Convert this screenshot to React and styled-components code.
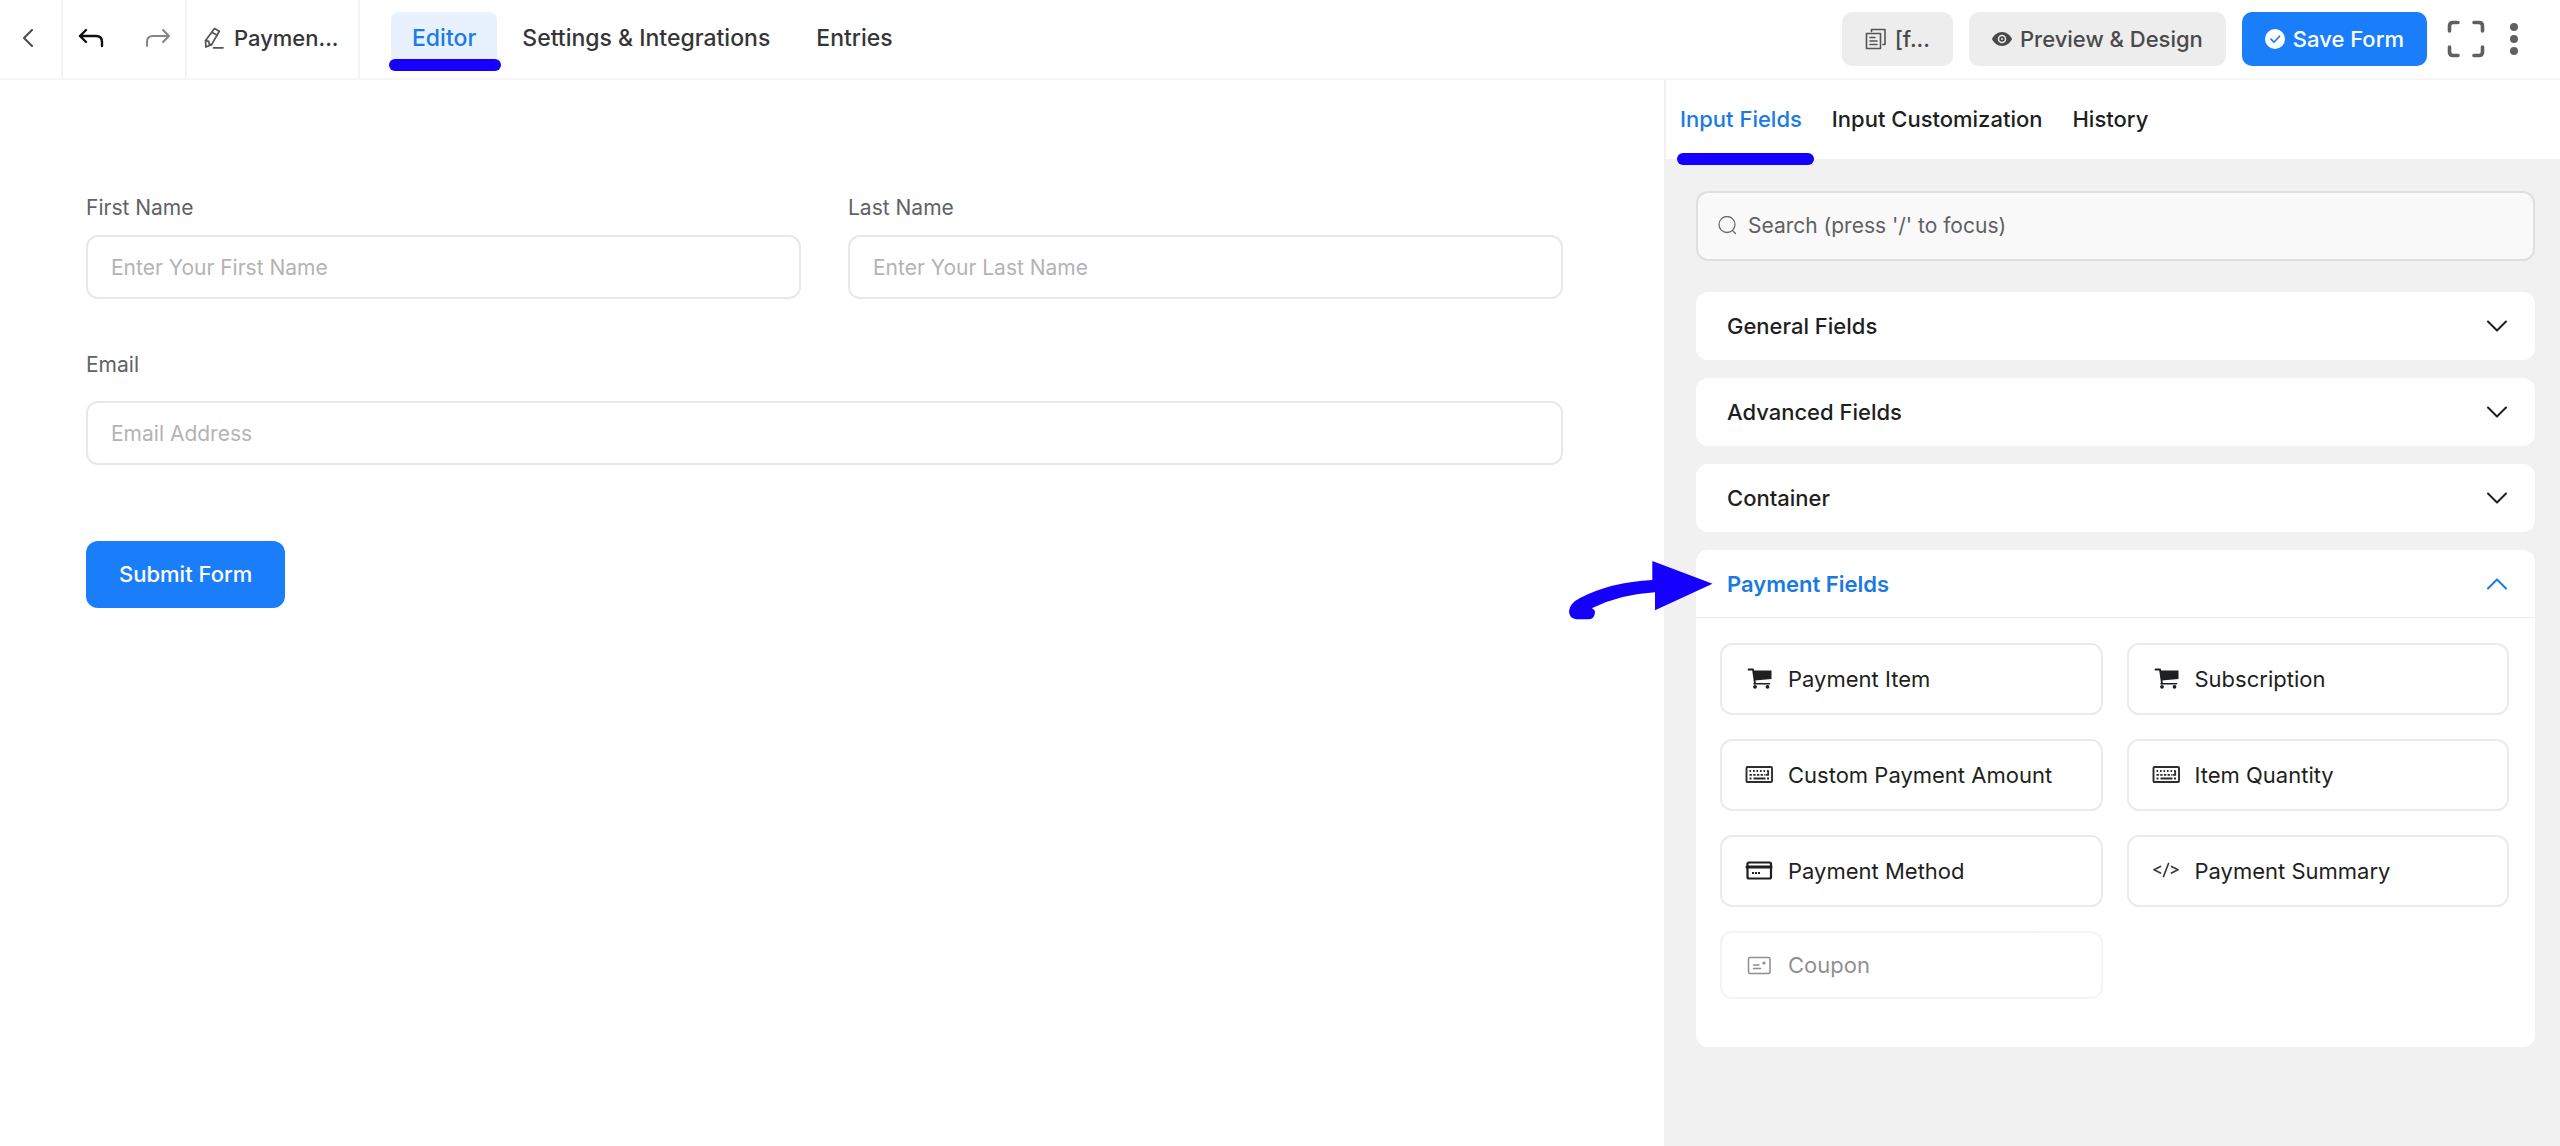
import React from "react";
import styled, { createGlobalStyle } from "styled-components";

const fields = [
  { label: "Payment Item", icon: "cart" },
  { label: "Subscription", icon: "cart" },
  { label: "Custom Payment Amount", icon: "keyboard" },
  { label: "Item Quantity", icon: "keyboard" },
  { label: "Payment Method", icon: "card" },
  { label: "Payment Summary", icon: "code" },
  { label: "Coupon", icon: "coupon", disabled: true },
];

const BackIcon = () => (
  <Svg width="12" height="18" viewBox="0 0 12 18">
    <path d="M10 1L2 9l8 8" stroke="#4a4a4c" strokeWidth="2" />
  </Svg>
);

const UndoIcon = () => (
  <Svg width="26" height="20" viewBox="0 0 26 20">
    <path d="M8 2L2 8l6 6M2 8h16q6 0 6 6v4" stroke="#111" strokeWidth="2.4" />
  </Svg>
);

const RedoIcon = () => (
  <Svg width="26" height="20" viewBox="0 0 26 20">
    <path d="M18 2l6 6-6 6M24 8H8q-6 0-6 6v4" stroke="#858587" strokeWidth="2" />
  </Svg>
);

const PencilIcon = () => (
  <Svg width="20" height="22" viewBox="0 0 20 22">
    <g stroke="#555557" strokeWidth="1.7">
      <path d="M10.5 1.5l4.8 2.8L7.6 17.6 1.8 20 1.6 13.6z" />
      <path d="M8.2 5.4l5 2.9M1.6 13.6l3.2.8.4 2.8 2.4.4" />
      <path d="M9.5 20.8h9.5" />
    </g>
  </Svg>
);

const CopyIcon = () => (
  <Svg width="22" height="22" viewBox="0 0 22 22">
    <g stroke="#555557" strokeWidth="1.6">
      <path d="M1.5 5.5h14v15h-14z" />
      <path d="M6.5 3.500V1.500h13.500v15h-2" />
      <path d="M5 9.500h5M5 13h7M5 16.500h7" />
    </g>
  </Svg>
);

const EyeIcon = () => (
  <Svg width="20" height="16" viewBox="0 0 20 16">
    <path d="M10 1C5.500 1 1.800 4.200 0 8c1.800 3.800 5.500 7 10 7s8.200-3.200 10-7c-1.800-3.800-5.500-7-10-7z" fill="#4a4a4c" />
    <circle cx="10" cy="8" r="3.5" stroke="#ededed" strokeWidth="1.5" />
    <circle cx="10" cy="8" r="1" fill="#ededed" />
  </Svg>
);

const CheckIcon = () => (
  <Svg width="20" height="20" viewBox="0 0 20 20">
    <circle cx="10" cy="10" r="10" fill="#fff" />
    <path d="M6 10.2l3 3 5.500-6" stroke="#1a7efb" strokeWidth="1.7" />
  </Svg>
);

const FullscreenIcon = () => (
  <Svg width="38" height="38" viewBox="0 0 38 38">
    <path
      d="M2.500 11V6q0-3.500 3.500-3.500h5M27 2.500h5q3.500 0 3.500 3.500v5M35.500 27v5q0 3.500-3.500 3.500h-5M11 35.500H6q-3.500 0-3.500-3.500v-5"
      stroke="#606062"
      strokeWidth="3.6"
    />
  </Svg>
);

const DotsIcon = () => (
  <Svg width="10" height="34" viewBox="0 0 10 34">
    <g fill="#606062">
      <circle cx="5" cy="5" r="4" />
      <circle cx="5" cy="17" r="4" />
      <circle cx="5" cy="29" r="4" />
    </g>
  </Svg>
);

const SearchIcon = () => (
  <Svg width="20" height="20" viewBox="0 0 20 20">
    <g stroke="#6b6b6d" strokeWidth="1.3">
      <circle cx="9" cy="8.500" r="8" />
      <path d="M14.500 14.500l3 3" />
    </g>
  </Svg>
);

const Chevron = ({ up }) => (
  <Svg width="20" height="12" viewBox="0 0 20 12">
    <path d={up ? "M1 10.5l9-9 9 9" : "M1 1.5l9 9 9-9"} stroke={up ? "#1a7ae0" : "#1e1f21"} strokeWidth="2" />
  </Svg>
);

const CartIcon = () => (
  <Svg width="28" height="24" viewBox="0 0 28 24">
    <path d="M3.500 2.500H8l2 14" stroke="#1e1f21" strokeWidth="1.8" />
    <path d="M8 3.500h18.500v8.500L9.500 13.500z" fill="#1e1f21" />
    <path d="M9 16.800h15.500" stroke="#1e1f21" strokeWidth="1.6" />
    <circle cx="10" cy="19.800" r="1.900" fill="#1e1f21" />
    <circle cx="22.500" cy="19.800" r="1.900" fill="#1e1f21" />
  </Svg>
);

const KeyboardIcon = () => (
  <Svg width="28" height="24" viewBox="0 0 28 24">
    <rect x="1.500" y="4" width="25.500" height="15" rx="1" stroke="#2c2d2f" strokeWidth="1.9" />
    <g stroke="#2c2d2f" strokeWidth="1.8" strokeLinecap="butt">
      <path d="M4.500 8h19" strokeDasharray="1.6 1.9" />
      <path d="M4.500 11.800h16" strokeDasharray="2.4 1.3" />
      <path d="M23.200 7.500v5M21 11.800h3" />
      <path d="M4.500 15.500h2M8.500 15.500h12M22 15.500h2" />
    </g>
  </Svg>
);

const CardIcon = () => (
  <Svg width="28" height="24" viewBox="0 0 28 24">
    <rect x="2.500" y="3.500" width="23.500" height="16" rx="1.500" stroke="#1e1f21" strokeWidth="2.2" />
    <path d="M2 8h24" stroke="#1e1f21" strokeWidth="3.2" />
    <path d="M7 14h8" stroke="#1e1f21" strokeWidth="1.8" strokeDasharray="2 1" strokeLinecap="butt" />
  </Svg>
);

const CodeIcon = () => (
  <Svg width="28" height="24" viewBox="0 0 28 24">
    <path d="M8.500 7.500L2 10.800l6.500 3.200M19.500 7.500l6.500 3.300-6.500 3.200M16.500 4.500l-5 13" stroke="#3a3b3d" strokeWidth="1.7" />
  </Svg>
);

const CouponIcon = () => (
  <Svg width="28" height="24" viewBox="0 0 28 24">
    <rect x="3.500" y="4.500" width="21.500" height="16" rx="1.500" stroke="#1e1f21" strokeWidth="1.5" />
    <path d="M8.500 12h5.500M8.500 15.500h7" stroke="#1e1f21" strokeWidth="1.5" />
    <circle cx="19" cy="10" r="1.600" fill="#1e1f21" />
  </Svg>
);

const icons = {
  cart: CartIcon,
  keyboard: KeyboardIcon,
  card: CardIcon,
  code: CodeIcon,
  coupon: CouponIcon,
};

function Header() {
  return (
    <HeaderBar>
      <BackCell>
        <IconButton aria-label="Back">
          <BackIcon />
        </IconButton>
      </BackCell>
      <UndoCell>
        <IconButton aria-label="Undo">
          <UndoIcon />
        </IconButton>
        <IconButton aria-label="Redo">
          <RedoIcon />
        </IconButton>
      </UndoCell>
      <NameCell>
        <PencilIcon />
        <span>Paymen...</span>
      </NameCell>
      <Nav>
        <NavLink href="#editor" $active>
          Editor
        </NavLink>
        <NavLink href="#settings">Settings &amp; Integrations</NavLink>
        <NavLink href="#entries">Entries</NavLink>
      </Nav>
      <Actions>
        <ActionButton>
          <CopyIcon />
          [f...
        </ActionButton>
        <ActionButton>
          <EyeIcon />
          Preview &amp; Design
        </ActionButton>
        <ActionButton $primary>
          <CheckIcon />
          Save Form
        </ActionButton>
        <IconGroup>
          <IconButton aria-label="Fullscreen">
            <FullscreenIcon />
          </IconButton>
          <IconButton aria-label="More">
            <DotsIcon />
          </IconButton>
        </IconGroup>
      </Actions>
    </HeaderBar>
  );
}

function FormCanvas() {
  return (
    <Canvas>
      <NameRow>
        <Field>
          <Label htmlFor="first">First Name</Label>
          <TextInput id="first" placeholder="Enter Your First Name" />
        </Field>
        <Field>
          <Label htmlFor="last">Last Name</Label>
          <TextInput id="last" placeholder="Enter Your Last Name" />
        </Field>
      </NameRow>
      <Field $wide>
        <Label htmlFor="email">Email</Label>
        <TextInput id="email" type="email" placeholder="Email Address" />
      </Field>
      <SubmitButton>Submit Form</SubmitButton>
    </Canvas>
  );
}

function Sidebar() {
  return (
    <Side>
      <SideTabs>
        <SideTab $active>Input Fields</SideTab>
        <SideTab>Input Customization</SideTab>
        <SideTab>History</SideTab>
      </SideTabs>
      <SideBody>
        <SearchBox>
          <SearchIcon />
          <SearchInput aria-label="Search" placeholder="Search (press '/' to focus)" />
        </SearchBox>
        {["General Fields", "Advanced Fields", "Container"].map((title) => (
          <Panel key={title}>
            <PanelHeader>
              {title}
              <Chevron />
            </PanelHeader>
          </Panel>
        ))}
        <Panel>
          <PanelHeader $open aria-expanded="true">
            Payment Fields
            <Chevron up />
          </PanelHeader>
          <FieldGrid>
            {fields.map(({ label, icon, disabled }) => {
              const Icon = icons[icon];
              return (
                <FieldItem key={label} disabled={disabled}>
                  <Icon />
                  {label}
                </FieldItem>
              );
            })}
          </FieldGrid>
          <Arrow viewBox="0 0 144 60" aria-hidden="true">
            <path d="M83.3 1L143.5 23.7 86 50.3V32.3Q52 34 22.7 48.3Q27 50 25.7 54Q25 59.3 19 59.3H7Q0 58 0 51Q1 43 11 38Q42 22 83.3 20z" />
          </Arrow>
        </Panel>
      </SideBody>
    </Side>
  );
}

function App() {
  return (
    <Page>
      <GlobalStyle />
      <Header />
      <Content>
        <FormCanvas />
        <Sidebar />
      </Content>
    </Page>
  );
}

export default App;

const GlobalStyle = createGlobalStyle`
  * {
    box-sizing: border-box;
  }
  body {
    margin: 0;
    background: #fff;
  }
  body, button, input {
    font-family: Inter, "Liberation Sans", sans-serif;
    font-size: 22px;
    line-height: 30px;
    color: #1e1f21;
  }
  button {
    border: 0;
    padding: 0;
    background: none;
    cursor: pointer;
  }
`;

const Svg = styled.svg`
  display: block;
  flex: none;
  fill: none;
  stroke-linecap: round;
  stroke-linejoin: round;
`;

const Page = styled.div`
  display: flex;
  flex-direction: column;
  min-height: 100vh;
`;

const HeaderBar = styled.header`
  display: flex;
  height: 80px;
  border-bottom: 2px solid #f6f6f6;
  font-weight: 500;
  color: #353537;
`;

const HeaderCell = styled.div`
  display: flex;
  align-items: center;
  border-right: 2px solid #f3f3f3;
  padding-bottom: 3px;
`;

const BackCell = styled(HeaderCell)`
  width: 63px;
  padding-left: 22px;
`;

const UndoCell = styled(HeaderCell)`
  width: 124px;
  padding-left: 15px;
  gap: 41px;
`;

const NameCell = styled(HeaderCell)`
  width: 173px;
  padding-left: 17px;
  gap: 10px;
`;

const IconButton = styled.button`
  display: flex;
`;

const Nav = styled.nav`
  display: flex;
  align-items: flex-start;
  gap: 4px;
  padding: 12px 0 0 31px;
  font-size: 23px;
`;

const NavLink = styled.a`
  position: relative;
  padding: 11px 21px;
  border-radius: 8px;
  text-decoration: none;
  color: ${(props) => (props.$active ? "#1a7ae8" : "#353537")};
  background: ${(props) => (props.$active ? "#e8f2ff" : "transparent")};

  &:after {
    content: "";
    display: ${(props) => (props.$active ? "block" : "none")};
    position: absolute;
    left: -2px;
    right: -4px;
    bottom: -7px;
    height: 12px;
    border-radius: 6px;
    background: #1500ff;
  }
`;

const Actions = styled.div`
  display: flex;
  align-items: center;
  gap: 16px;
  margin-left: auto;
  padding: 0 41px 1px 0;
`;

const ActionButton = styled.button`
  display: flex;
  align-items: center;
  gap: 8px;
  height: 54px;
  padding: 0 23px;
  border-radius: 10px;
  font-weight: 500;
  color: ${(props) => (props.$primary ? "#fff" : "#4a4a4c")};
  background: ${(props) => (props.$primary ? "#1a7efb" : "#ededed")};
`;

const IconGroup = styled.div`
  display: flex;
  align-items: center;
  gap: 24px;
  margin-left: 4px;
`;

const Content = styled.div`
  display: flex;
  flex: 1;
`;

const Canvas = styled.main`
  flex: 1;
  padding: 113px 101px 0 86px;
`;

const NameRow = styled.div`
  display: grid;
  grid-template-columns: 1fr 1fr;
  gap: 47px;
  margin-bottom: 51px;
`;

const Field = styled.div`
  display: flex;
  flex-direction: column;
  gap: ${(props) => (props.$wide ? "21px" : "12px")};
`;

const Label = styled.label`
  font-size: 21px;
  color: #606266;
`;

const TextInput = styled.input`
  width: 100%;
  height: 64px;
  padding: 0 23px;
  border: 2px solid #e8e8ea;
  border-radius: 12px;
  background: #fff;
  font-size: 21px;

  &::placeholder {
    color: #b3b3b5;
  }
`;

const SubmitButton = styled.button`
  height: 67px;
  margin-top: 76px;
  padding: 0 33px 2px;
  border-radius: 12px;
  font-weight: 500;
  color: #fff;
  background: #1a7efb;
`;

const Side = styled.aside`
  width: 35%;
  background: #f1f1f1;
`;

const SideTabs = styled.div`
  display: flex;
  align-items: center;
  gap: 30px;
  height: 79px;
  padding: 0 14px;
  background: #fff;
  border-left: 2px solid #f1f1f1;
`;

const SideTab = styled.button`
  position: relative;
  height: 79px;
  padding-bottom: 2px;
  font-weight: 500;
  color: ${(props) => (props.$active ? "#1a7ae8" : "#1e1f21")};

  &:after {
    content: "";
    display: ${(props) => (props.$active ? "block" : "none")};
    position: absolute;
    left: -3px;
    right: -12px;
    bottom: -6px;
    height: 12px;
    border-radius: 6px;
    background: #1500ff;
  }
`;

const SideBody = styled.div`
  display: flex;
  flex-direction: column;
  gap: 18px;
  padding: 32px 25px 32px 32px;
`;

const SearchBox = styled.div`
  display: flex;
  align-items: center;
  gap: 10px;
  height: 70px;
  margin-bottom: 13px;
  padding: 0 20px;
  border: 2px solid #dfdfdf;
  border-radius: 12px;
  background: #f9f9f9;
`;

const SearchInput = styled.input`
  flex: 1;
  border: 0;
  padding: 0;
  background: transparent;
  outline: none;
  font-size: 21px;

  &::placeholder {
    color: #606062;
  }
`;

const Panel = styled.section`
  position: relative;
  border-radius: 12px;
  background: #fff;
`;

const PanelHeader = styled.button`
  display: flex;
  align-items: center;
  justify-content: space-between;
  width: 100%;
  height: 68px;
  padding: 0 28px 0 31px;
  font-weight: ${(props) => (props.$open ? "600" : "500")};
  color: ${(props) => (props.$open ? "#1a7ae0" : "#1e1f21")};
  border-bottom: ${(props) => (props.$open ? "1px solid #ebebeb" : "0")};
`;

const FieldGrid = styled.div`
  display: grid;
  grid-template-columns: 1fr 1fr;
  gap: 24px;
  padding: 25px 26px 48px 24px;
`;

const FieldItem = styled.button`
  display: flex;
  align-items: center;
  gap: 15px;
  height: ${(props) => (props.disabled ? "68px" : "72px")};
  padding: 0 23px;
  border: 2px solid #ebebeb;
  border-radius: 12px;
  color: #1e1f21;
  opacity: ${(props) => (props.disabled ? "0.5" : "1")};
`;

const Arrow = styled.svg`
  position: absolute;
  left: -127px;
  top: 10px;
  width: 144px;
  height: 60px;
  fill: #1500ff;
`;
